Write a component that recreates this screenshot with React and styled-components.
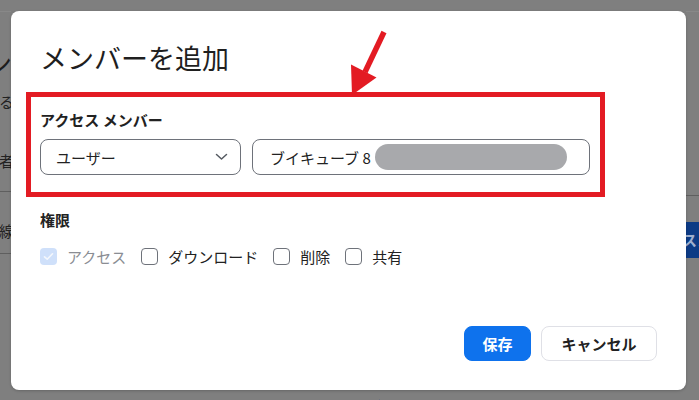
import React from "react";
import styled, { createGlobalStyle } from "styled-components";

const GlobalStyle = createGlobalStyle`
  html, body {
    margin: 0;
    padding: 0;
    width: 699px;
    height: 400px;
    overflow: hidden;
    background: #7f7f7f;
  }
  body {
    font-family: "Noto Sans CJK JP", "Noto Sans", sans-serif;
  }
  * { box-sizing: border-box; }
`;

const permissions = [
  { label: "アクセス", checked: true, disabled: true },
  { label: "ダウンロード" },
  { label: "削除" },
  { label: "共有" },
];

const ChevronDown = () => (
  <svg width="13" height="8" viewBox="0 0 13 8">
    <path d="M1.5 1.5 L6.5 6 L11.5 1.5" fill="none" stroke="#555a61" strokeWidth="1.5" strokeLinecap="round" strokeLinejoin="round" />
  </svg>
);

const CheckMark = () => (
  <svg width="11" height="9" viewBox="0 0 11 9">
    <path d="M1.5 4.8 L4.2 7.2 L9.5 1.8" fill="none" stroke="#f4f7fc" strokeWidth="1.6" strokeLinecap="round" strokeLinejoin="round" />
  </svg>
);

const App = () => {
  return (
    <>
      <GlobalStyle />
      <Page>
        <LeftStrip>
          <StripTop />
          <LeftText>
            <BgTitle>ン</BgTitle>
            <BgLine $top={13}>しる</BgLine>
            <BgLine $top={39}>者</BgLine>
            <BgRule $top={20} />
            <BgLine $top={29}>線</BgLine>
            <BgRule $top={12} />
          </LeftText>
        </LeftStrip>

        <Center>
          <Modal>
            <Title>メンバーを追加</Title>

            <Frame>
              <Label>アクセス メンバー</Label>
              <Row>
                <Select>
                  <span>ユーザー</span>
                  <ChevronDown />
                </Select>
                <Input>
                  <span>ブイキューブ 8</span>
                  <Masked />
                </Input>
              </Row>
            </Frame>

            <Section>
              <Label>権限</Label>
              <CheckRow>
                {permissions.map((p) => (
                  <CheckItem key={p.label} $disabled={p.disabled}>
                    <Box $checked={p.checked}>{p.checked && <CheckMark />}</Box>
                    {p.label}
                  </CheckItem>
                ))}
              </CheckRow>
            </Section>

            <Footer>
              <PrimaryButton>保存</PrimaryButton>
              <SecondaryButton>キャンセル</SecondaryButton>
            </Footer>

            <Arrow width="60" height="72" viewBox="0 0 60 72">
              <line x1="43" y1="6" x2="24" y2="46" stroke="#e31b23" strokeWidth="5.5" />
              <polygon points="10,38.5 35.5,51.5 11,69" fill="#e31b23" />
            </Arrow>
          </Modal>
          <BottomStrip>
            <svg width="30" height="10" viewBox="0 0 30 10">
              <path d="M2 9 Q 8 3 14 6 T 26 1" fill="none" stroke="#3c4f8c" strokeWidth="1.5" strokeDasharray="1.5 3" />
            </svg>
          </BottomStrip>
        </Center>

        <RightStrip>
          <StripTop />
          <BgRule $top={183} />
          <BlueBand>スン</BlueBand>
        </RightStrip>
      </Page>
    </>
  );
};

const Page = styled.div`
  display: flex;
  width: 699px;
  height: 400px;
  background: #7f7f7f;
`;

const LeftStrip = styled.div`
  width: 11px;
  flex-shrink: 0;
  overflow: hidden;
  display: flex;
  flex-direction: column;
`;

const StripTop = styled.div`
  height: 12px;
  flex-shrink: 0;
  border-bottom: 1px solid #888888;
`;

const LeftText = styled.div`
  width: 200px;
  margin-left: -189px;
  display: flex;
  flex-direction: column;
  align-items: flex-end;
  color: #1c1c1c;
`;

const BgTitle = styled.div`
  margin-top: 35px;
  font-size: 27px;
  line-height: 32px;
  margin-right: -1px;
`;

const BgLine = styled.div`
  margin-top: ${(p) => p.$top}px;
  font-size: 15px;
  line-height: 20px;
  margin-right: -3px;
  color: #222;
`;

const BgRule = styled.div`
  margin-top: ${(p) => p.$top}px;
  width: 100%;
  height: 1px;
  flex-shrink: 0;
  background: #5f5f5f;
`;

const Center = styled.div`
  width: 675px;
  flex-shrink: 0;
  display: flex;
  flex-direction: column;
  padding-top: 11px;
`;

const Modal = styled.div`
  position: relative;
  height: 379px;
  background: #ffffff;
  border-radius: 8px;
  box-shadow: 0 1px 3px rgba(0, 0, 0, 0.2);
  padding: 31px 29px 29px 29px;
  display: flex;
  flex-direction: column;
`;

const Title = styled.h1`
  margin: 0;
  font-size: 27px;
  line-height: 32px;
  font-weight: 400;
  color: #1f1f1f;
`;

const Frame = styled.div`
  width: 579px;
  margin: 18px 0 0 -14px;
  border: 5px solid #e31b23;
  padding: 12px 10px 17px 9px;
`;

const Label = styled.div`
  font-size: 15px;
  line-height: 22px;
  font-weight: 700;
  color: #222222;
`;

const Row = styled.div`
  display: flex;
  gap: 11px;
  margin-top: 8px;
`;

const Field = styled.div`
  height: 36px;
  border: 1px solid #6e727a;
  border-radius: 8px;
  display: flex;
  align-items: center;
  font-size: 15px;
  color: #222222;
`;

const Select = styled(Field)`
  width: 201px;
  justify-content: space-between;
  padding: 0 12px 0 15px;
`;

const Input = styled(Field)`
  width: 338px;
  padding: 0 0 0 17px;
`;

const Masked = styled.span`
  width: 192px;
  height: 26px;
  margin-left: 4px;
  border-radius: 13px;
  background: #a8a9ac;
`;

const Section = styled.div`
  margin-top: 12px;
`;

const CheckRow = styled.div`
  display: flex;
  gap: 15px;
  margin-top: 15px;
`;

const CheckItem = styled.label`
  display: flex;
  align-items: center;
  gap: 10px;
  height: 20px;
  font-size: 15px;
  color: ${(p) => (p.$disabled ? "#8a8d93" : "#222222")};
`;

const Box = styled.span`
  width: 17px;
  height: 17px;
  border-radius: 4px;
  display: flex;
  align-items: center;
  justify-content: center;
  border: ${(p) => (p.$checked ? "none" : "1px solid #6e727a")};
  background: ${(p) => (p.$checked ? "#cfe0fa" : "#ffffff")};
`;

const Footer = styled.div`
  margin-top: auto;
  display: flex;
  justify-content: flex-end;
  gap: 10px;
`;

const Button = styled.button`
  height: 35px;
  border-radius: 8px;
  font-family: inherit;
  font-size: 15px;
  font-weight: 700;
  cursor: pointer;
`;

const PrimaryButton = styled(Button)`
  width: 67px;
  border: 1px solid #0e72ed;
  background: #0e72ed;
  color: #ffffff;
`;

const SecondaryButton = styled(Button)`
  width: 116px;
  border: 1px solid #dfe0e6;
  background: #ffffff;
  color: #222222;
`;

const Arrow = styled.svg`
  position: absolute;
  left: 330px;
  top: 15px;
`;

const BottomStrip = styled.div`
  height: 10px;
  padding-left: 343px;
`;

const RightStrip = styled.div`
  flex: 1;
  overflow: hidden;
  display: flex;
  flex-direction: column;
`;

const BlueBand = styled.div`
  margin-top: 26px;
  height: 36px;
  background: #0d3b85;
  color: #9fb0cf;
  font-size: 15px;
  line-height: 36px;
  font-weight: 700;
  white-space: nowrap;
  margin-left: -4px;
`;

export default App;
